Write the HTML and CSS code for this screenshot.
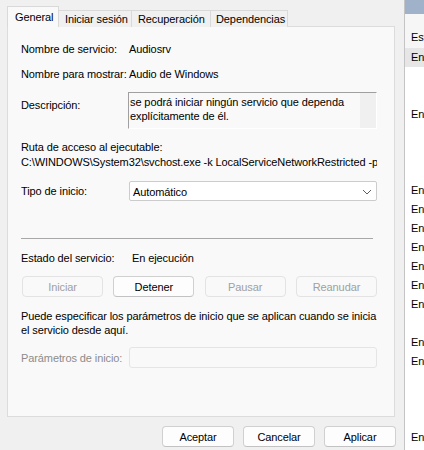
FILE: index.html
```html
<!DOCTYPE html>
<html lang="es">
<head>
<meta charset="utf-8">
<title>Propiedades de Audio de Windows</title>
<link rel="stylesheet" href="styles.css">
</head>
<body>
<div class="screen">
  <div class="dialog">
    <div class="tabs">
      <div class="tab active">General</div>
      <div class="tab t2">Iniciar sesión</div>
      <div class="tab t3">Recuperación</div>
      <div class="tab t4">Dependencias</div>
    </div>
    <div class="panel">
      <div class="row r1"><span class="label">Nombre de servicio:</span><span>Audiosrv</span></div>
      <div class="row r2"><span class="label">Nombre para mostrar:</span><span>Audio de Windows</span></div>
      <div class="row desc-row">
        <span class="label desc-label">Descripción:</span>
        <div class="desc-box">
          <div class="desc-text">se podrá iniciar ningún servicio que dependa<br>explícitamente de él.</div>
          <div class="desc-scroll"></div>
        </div>
      </div>
      <div class="path-block">
        <div>Ruta de acceso al ejecutable:</div>
        <div class="path">C:\WINDOWS\System32\svchost.exe -k LocalServiceNetworkRestricted -p</div>
      </div>
      <div class="row type-row">
        <span class="label">Tipo de inicio:</span>
        <div class="combo">
          <span>Automático</span>
          <svg class="chev" width="10" height="6" viewBox="0 0 10 6"><path d="M1 1 L5 5 L9 1" fill="none" stroke="#5f5f5f" stroke-width="1"/></svg>
        </div>
      </div>
      <div class="sep"></div>
      <div class="row state-row"><span class="label state-label">Estado del servicio:</span><span>En ejecución</span></div>
      <div class="btn-row">
        <div class="btn disabled">Iniciar</div>
        <div class="btn">Detener</div>
        <div class="btn disabled">Pausar</div>
        <div class="btn disabled">Reanudar</div>
      </div>
      <div class="hint">Puede especificar los parámetros de inicio que se aplican cuando se inicia<br>el servicio desde aquí.</div>
      <div class="row param-row">
        <span class="label muted">Parámetros de inicio:</span>
        <div class="param-input"></div>
      </div>
    </div>
    <div class="footer">
      <div class="btn fbtn">Aceptar</div>
      <div class="btn fbtn">Cancelar</div>
      <div class="btn fbtn">Aplicar</div>
    </div>
  </div>
  <div class="side">
    <div class="side-top"></div>
    <div class="side-head">Est</div>
    <div class="srow sel">En</div>
    <div class="srow"></div>
    <div class="srow"></div>
    <div class="srow">En</div>
    <div class="srow"></div>
    <div class="srow"></div>
    <div class="srow"></div>
    <div class="srow">En</div>
    <div class="srow">En</div>
    <div class="srow">En</div>
    <div class="srow">En</div>
    <div class="srow">En</div>
    <div class="srow">En</div>
    <div class="srow">En</div>
    <div class="srow"></div>
    <div class="srow">En</div>
    <div class="srow">En</div>
    <div class="srow"></div>
    <div class="srow"></div>
    <div class="srow"></div>
    <div class="srow">En</div>
  </div>
</div>
</body>
</html>
```
FILE: styles.css
```css
* { box-sizing: border-box; }
html, body { margin: 0; padding: 0; }
body {
  width: 424px;
  height: 450px;
  overflow: hidden;
  font-family: "Liberation Sans", Arial, sans-serif;
  font-size: 11px;
  letter-spacing: -0.1px;
  color: #000;
  background: #f0f0f0;
}
.screen { display: flex; width: 424px; height: 450px; }
.dialog {
  width: 405px;
  height: 450px;
  flex: none;
  background: #f0f0f0;
  border-right: 1px solid #c4c4c4;
  padding: 6px 0 0 7px;
}
.tabs { display: flex; align-items: flex-end; height: 21px; }
.tab {
  height: 17px;
  border: 1px solid #d9d9d9;
  border-bottom: none;
  background: #f0f0f0;
  margin-left: -1px;
  padding: 0 5px;
  line-height: 17px;
  white-space: nowrap;
}
.tab.active {
  position: relative;
  z-index: 1;
  margin-left: 0;
  height: 21px;
  width: 52px;
  background: #f9f9f9;
  line-height: 20px;
  padding-left: 7px;
}
.t2 { width: 74px; padding-left: 6px; }
.t3 { width: 80px; padding-left: 6px; }
.t4 { width: 78px; padding-left: 5px; }
.panel {
  width: 388px;
  height: 391px;
  margin-top: -1px;
  border: 1px solid #dcdcdc;
  background: #f9f9f9;
  padding-left: 13px;
}
.row { display: flex; align-items: center; }
.label { width: 108px; flex: none; white-space: nowrap; }
.r1 { margin-top: 15px; height: 14px; }
.r2 { margin-top: 11px; height: 14px; }
.desc-row { margin-top: 11px; align-items: flex-start; }
.desc-label { width: 107px; padding-top: 6px; line-height: 14px; }
.desc-box {
  width: 249px;
  height: 37px;
  display: flex;
  border-top: 1px solid #a0a0a0;
  border-left: 1px solid #a0a0a0;
  border-right: 1px solid #ffffff;
  border-bottom: 1px solid #ffffff;
  background: #f9f9f9;
}
.desc-text { flex: 1; padding: 2px 0 0 1px; line-height: 14px; white-space: nowrap; overflow: hidden; }
.desc-scroll { width: 16px; background: #f0f0f0; }
.path-block { margin-top: 11px; line-height: 15px; }
.path { width: 356px; white-space: nowrap; overflow: hidden; }
.type-row { margin-top: 11px; height: 20px; }
.combo {
  width: 248px;
  height: 20px;
  border: 1px solid #cccccc;
  border-radius: 2px;
  background: #ffffff;
  display: flex;
  align-items: center;
  justify-content: space-between;
  padding: 1px 4px 0 3px;
}
.chev { display: block; }
.sep { margin-top: 37px; width: 352px; height: 1px; background: #a8a8a8; }
.state-row { margin-top: 11px; height: 14px; padding-top: 1px; }
.state-label { width: 111px; }
.btn-row {
  margin-top: 12px;
  margin-left: 1px;
  width: 355px;
  display: flex;
  justify-content: space-between;
}
.btn {
  width: 81px;
  height: 21px;
  border: 1px solid #d0d0d0;
  border-bottom-color: #c2c2c2;
  border-radius: 4px;
  background: #fdfdfd;
  text-align: center;
  line-height: 20px;
  white-space: nowrap;
}
.btn.disabled {
  border-color: #e3e3e3;
  background: #f9f9f9;
  color: #a0a0a0;
}
.hint { margin-top: 12px; line-height: 14px; white-space: nowrap; }
.param-row { margin-top: 10px; height: 21px; }
.muted { color: #8c8c8c; }
.param-input {
  width: 248px;
  height: 21px;
  border: 1px solid #e5e5e5;
  border-radius: 3px;
  background: #f9f9f9;
}
.footer {
  margin-top: 9px;
  display: flex;
  justify-content: flex-end;
  gap: 9px;
  padding-right: 8px;
}
.fbtn { width: 72px; }
.side {
  flex: 1;
  background: #ffffff;
  overflow: hidden;
  white-space: nowrap;
}
.side-top { height: 14px; background: #9fb2ca; }
.side-head {
  height: 34px;
  background: #f6f6f6;
  padding: 16px 0 0 6px;
  line-height: 14px;
}
.srow { height: 19px; line-height: 19px; padding-left: 6px; }
.srow.sel { background: #e6e6e6; }
```
